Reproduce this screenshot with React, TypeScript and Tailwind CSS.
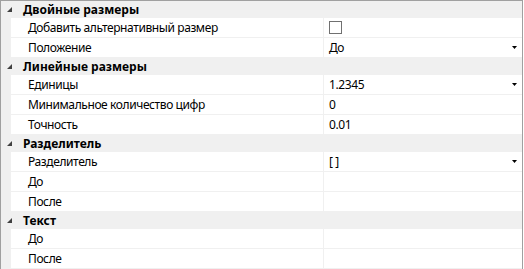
import React from "react";

type Row =
  | { kind: "cat"; label: string }
  | { kind: "prop"; label: string; value?: string; checkbox?: boolean; dropdown?: boolean };

const rows: Row[] = [
  { kind: "cat", label: "Двойные размеры" },
  { kind: "prop", label: "Добавить альтернативный размер", checkbox: true },
  { kind: "prop", label: "Положение", value: "До", dropdown: true },
  { kind: "cat", label: "Линейные размеры" },
  { kind: "prop", label: "Единицы", value: "1.2345", dropdown: true },
  { kind: "prop", label: "Минимальное количество цифр", value: "0" },
  { kind: "prop", label: "Точность", value: "0.01" },
  { kind: "cat", label: "Разделитель" },
  { kind: "prop", label: "Разделитель", value: "[ ]", dropdown: true },
  { kind: "prop", label: "До" },
  { kind: "prop", label: "После" },
  { kind: "cat", label: "Текст" },
  { kind: "prop", label: "До" },
  { kind: "prop", label: "После" },
];

function Expander() {
  return (
    <svg width="5" height="5" viewBox="0 0 5 5" className="block">
      <polygon points="5,0 5,5 0,5" fill="#404040" />
    </svg>
  );
}

function Arrow() {
  return (
    <svg width="5" height="3" viewBox="0 0 5 3" className="block">
      <polygon points="0,0 5,0 2.5,3" fill="#000" />
    </svg>
  );
}

export default function App() {
  return (
    <div
      className="w-[523px] h-[269px] overflow-hidden bg-white border-t border-l border-r border-[#a0a0a0] text-[12px] text-black"
      style={{ fontFamily: '"Noto Sans", "Open Sans", sans-serif' }}
    >
      {rows.map((r, i) =>
        r.kind === "cat" ? (
          <div key={i} className="h-[17px] bg-[#f0f0f0] flex items-center">
            <div className="w-[22px] pl-[6px] flex items-center">
              <Expander />
            </div>
            <span className="font-bold leading-none">{r.label}</span>
          </div>
        ) : (
          <div key={i} className="h-[20px] flex">
            <div className="w-[10px] bg-[#f0f0f0]" />
            <div className="flex flex-1 border-b border-[#f0f0f0] tracking-[-0.4px]">
              <div className="w-[313px] border-r border-[#f0f0f0] pl-[17px] flex items-center leading-none whitespace-nowrap">
                {r.label}
              </div>
              <div className="flex-1 flex items-center pl-[5px] pr-[5px] leading-none">
                {r.checkbox ? (
                  <div className="w-[13px] h-[13px] border border-[#707070] bg-white" />
                ) : (
                  <span>{r.value}</span>
                )}
                {r.dropdown && (
                  <div className="ml-auto">
                    <Arrow />
                  </div>
                )}
              </div>
            </div>
          </div>
        )
      )}
    </div>
  );
}
